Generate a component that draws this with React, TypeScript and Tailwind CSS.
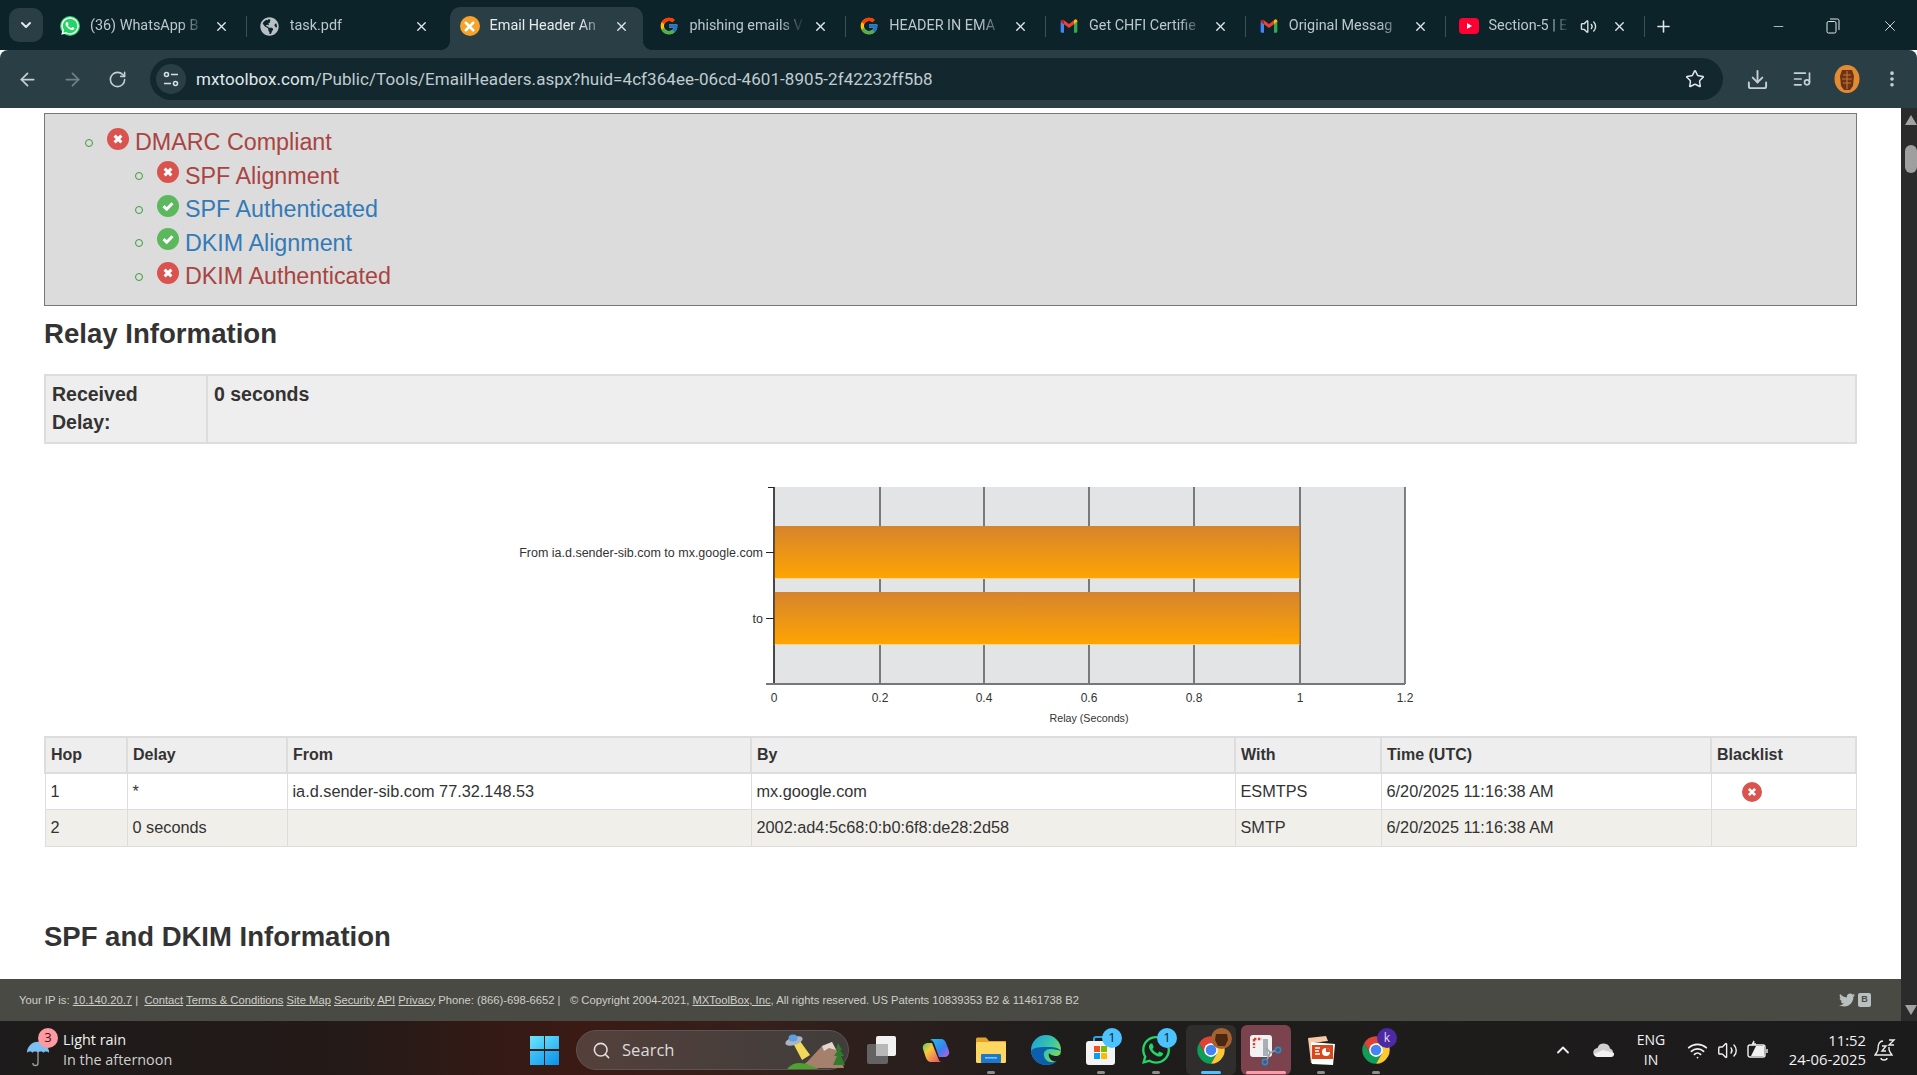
import type { ReactNode } from "react";
import {
  ArrowLeft,
  ArrowRight,
  ChevronDown,
  ChevronUp,
  Download,
  EllipsisVertical,
  ListMusic,
  Minus,
  Plus,
  RotateCw,
  Search,
  Star,
  Volume2,
  Wifi,
  X,
} from "lucide-react";
import { FaGlobeAmericas, FaTwitter, FaWhatsapp } from "react-icons/fa";
import { FcGoogle } from "react-icons/fc";

const sans = "font-['Liberation_Sans',Arial,sans-serif]";

// Small icons -------------------------------------------------------------

const ChromeIcon = ({ size = 30 }: { size?: number }) => (
  <svg width={size} height={size} viewBox="0 0 48 48">
    <path d="M43.05 13A22 22 0 0 0 4.95 13L14.5 29.5 24 13Z" fill="#db4437" />
    <path d="M4.95 13A22 22 0 0 0 24 46L33.5 29.5H14.5Z" fill="#0f9d58" />
    <path d="M24 46A22 22 0 0 0 43.05 13H24L33.5 29.5Z" fill="#fcc934" />
    <circle cx="24" cy="24" r="11" fill="#fff" />
    <circle cx="24" cy="24" r="8.5" fill="#4285f4" />
  </svg>
);

const GmailIcon = () => (
  <svg width="20" height="20" viewBox="0 0 24 24">
    <path d="M2 6v13a1 1 0 0 0 1 1h3V10z" fill="#4285f4" />
    <path d="M22 6v13a1 1 0 0 1-1 1h-3V10z" fill="#34a853" />
    <path d="M6 10l6 4.5 6-4.5V5l-6 4.5L6 5z" fill="#ea4335" />
    <path d="M18 5v5l4-3V6c0-1.6-2-2.6-3-1.7z" fill="#fbbc04" />
    <path d="M2 6v1l4 3V5C5 3.8 2 4.4 2 6z" fill="#c5221f" />
  </svg>
);

const MxIcon = () => (
  <div className="flex h-5 w-5 items-center justify-center rounded-full bg-[#f5a32c]">
    <X size={15} strokeWidth={4} color="#fff" />
  </div>
);

const WhatsAppTab = () => (
  <div className="flex h-5 w-5 items-center justify-center rounded-full bg-[#25d366]">
    <FaWhatsapp size={20} color="#fff" />
  </div>
);

const YouTubeIcon = () => (
  <svg width="20" height="20" viewBox="0 0 20 20">
    <rect x="0" y="2" width="20" height="16" rx="4" fill="#ff0033" />
    <path d="M8 7l5 3-5 3z" fill="#fff" />
  </svg>
);

const StatusFail = ({ size = 22 }: { size?: number }) => (
  <svg width={size} height={size} viewBox="0 0 22 22" className="shrink-0">
    <circle cx="11" cy="11" r="11" fill="#d9534f" />
    <path d="M7.6 7.6l6.8 6.8M14.4 7.6l-6.8 6.8" stroke="#fff" strokeWidth="3" />
  </svg>
);

const StatusPass = () => (
  <svg width="22" height="22" viewBox="0 0 22 22" className="shrink-0">
    <circle cx="11" cy="11" r="11" fill="#5cb85c" />
    <path d="M6.5 11.2l3.2 3 5.8-6" stroke="#fff" strokeWidth="3" fill="none" />
  </svg>
);

const Avatar = () => (
  <svg width="26" height="28" viewBox="0 0 26 28">
    <ellipse cx="13" cy="14" rx="12.5" ry="14" fill="#e38b32" />
    <path d="M8 5h10l2 6-1 10-3 4h-6l-3-4-1-10z" fill="#6b3418" />
    <path d="M9 10h8M8 14h10M9 18h8M13 6v18" stroke="#c9742c" strokeWidth="1.1" />
  </svg>
);

const TuneIcon = () => (
  <svg width="18" height="18" viewBox="0 0 18 18" fill="none" stroke="#d5dee0" strokeWidth="1.6">
    <circle cx="4.5" cy="4.5" r="2" />
    <path d="M9 4.5h7M2 13.5h7" />
    <circle cx="13.5" cy="13.5" r="2" />
  </svg>
);

const RestoreIcon = () => (
  <svg width="14" height="16" viewBox="0 0 14 16" fill="none" stroke="#e4e9ea" strokeWidth="1">
    <rect x="1" y="3.5" width="9" height="11.5" rx="1.5" />
    <path d="M4 1h7.5a1.5 1.5 0 0 1 1.5 1.5V12" />
  </svg>
);

const WindowsLogo = () => (
  <div className="grid h-[29px] w-[29px] grid-cols-2 gap-[1.5px]">
    <div className="bg-[linear-gradient(135deg,#6fe3fb,#3cc4f5)]" />
    <div className="bg-[linear-gradient(135deg,#5cd8fa,#2db4f3)]" />
    <div className="bg-[linear-gradient(135deg,#43c6f7,#1fa4ef)]" />
    <div className="bg-[linear-gradient(135deg,#2fb5f4,#0f8fe8)]" />
  </div>
);

const SearchArt = () => (
  <svg width="62" height="40" viewBox="0 0 62 40">
    <path d="M9 13l7-2 10 14-8 5z" fill="#f1d95a" />
    <ellipse cx="10" cy="11" rx="9" ry="4" fill="#a9b5c6" transform="rotate(-18 10 11)" />
    <ellipse cx="9" cy="8" rx="4.500" ry="3.500" fill="#5d9fe0" />
    <path d="M16 38l8-7 14-15 10-4 9 16 3 10z" fill="#a5806c" />
    <path d="M38 16l10-4 4 8-7-2-5 3z" fill="#e3d6cc" />
    <path d="M3 39c6-7 14-7 22-4l10 4z" fill="#4ca12f" />
    <path d="M54 13l4 7h-2l4 6h-3l4 9H49l4-9h-3l4-6h-2z" fill="#2f7d2b" />
  </svg>
);

const TaskView = () => (
  <svg width="32" height="32" viewBox="0 0 32 32">
    <rect x="11" y="2" width="20" height="20" rx="2" fill="#f2f2f2" />
    <rect x="2" y="10" width="21" height="20" rx="2" fill="#6f6f6f" fillOpacity="0.85" />
    <rect x="11" y="10" width="12" height="12" fill="#b8b8b8" />
  </svg>
);

const Copilot = () => (
  <svg width="30" height="30" viewBox="0 0 30 30">
    <defs>
      <linearGradient id="cpA" x1="0" y1="0" x2="1" y2="1">
        <stop offset="0" stopColor="#19c3e6" />
        <stop offset="0.6" stopColor="#3f7cf0" />
        <stop offset="1" stopColor="#c05fd8" />
      </linearGradient>
      <linearGradient id="cpB" x1="0" y1="0" x2="1" y2="1">
        <stop offset="0" stopColor="#52c96a" />
        <stop offset="0.35" stopColor="#f7c93e" />
        <stop offset="1" stopColor="#e8456a" />
      </linearGradient>
    </defs>
    <path d="M11 4h9c3 0 4 2 5 4l3 8c1 4-2 6-5 6h-5L13 8C12 6 11 5 9 5z" fill="url(#cpA)" />
    <path d="M20 27H10c-3 0-4-2-5-4L2 14c-1-4 2-6 5-6h4l6 15c1 2 1 3 3 4z" fill="url(#cpB)" />
  </svg>
);

const Folder = () => (
  <svg width="30" height="30" viewBox="0 0 30 30">
    <path d="M0 4a1.5 1.5 0 0 1 1.5-1.5H10L13 6h17v3H0z" fill="#e3a32b" />
    <rect x="0" y="7" width="30" height="21" rx="1.5" fill="#fcd860" />
    <rect x="5" y="19" width="20" height="9" rx="1" fill="#1d78c9" />
    <rect x="9" y="22" width="12" height="1.6" fill="#7cc2f2" />
  </svg>
);

const Edge = () => (
  <svg width="30" height="30" viewBox="0 0 30 30">
    <defs>
      <linearGradient id="edA" x1="0" y1="0" x2="1" y2="0.6">
        <stop offset="0" stopColor="#1b9de2" />
        <stop offset="0.6" stopColor="#37c6a8" />
        <stop offset="1" stopColor="#7bdc56" />
      </linearGradient>
    </defs>
    <circle cx="15" cy="15" r="15" fill="url(#edA)" />
    <path d="M0 16C1 26 9 30 15 30c5 0 8-1 11-4-6 3-12 0-13-5-1-4 2-7 6-7 5 0 11 2 11 2 0-1-4-4-10-4C8 12 3 12 0 16z" fill="#0d5fae" />
    <path d="M30 16c0 3-2 5-5 5-2 0-6-1-7-3-1 3 1 7 4 8 2 1 4 0 5-1 2-3 3-6 3-9z" fill="#1e2020" />
  </svg>
);

const Store = () => (
  <svg width="30" height="30" viewBox="0 0 30 30">
    <path d="M8 7V4a2 2 0 0 1 2-2h10" fill="none" stroke="#29a4e8" strokeWidth="2" />
    <rect x="0" y="6" width="29" height="24" rx="3" fill="#f4f4f4" />
    <rect x="8" y="11" width="6" height="6" fill="#f25022" />
    <rect x="15" y="11" width="6" height="6" fill="#7fba00" />
    <rect x="8" y="18" width="6" height="6" fill="#00a4ef" />
    <rect x="15" y="18" width="6" height="6" fill="#ffb900" />
  </svg>
);

const Snip = () => (
  <svg width="32" height="32" viewBox="0 0 32 32">
    <rect x="0" y="1" width="22" height="22" rx="3" fill="#f2f2f2" />
    <path d="M4 5h8M4 5v9" stroke="#d8412f" strokeWidth="2.4" strokeDasharray="2.4 1.5" fill="none" />
    <rect x="13" y="5" width="5" height="17" fill="#a9b0b5" />
    <path d="M16 14l4 4-3 8M26 16l-6 3-3 7" stroke="#9aa0a5" strokeWidth="1.6" fill="none" />
    <circle cx="15" cy="28" r="2.6" fill="none" stroke="#1e90d6" strokeWidth="1.6" />
    <circle cx="28" cy="16" r="2.6" fill="none" stroke="#1e90d6" strokeWidth="1.6" />
  </svg>
);

const Ppt = () => (
  <svg width="30" height="30" viewBox="0 0 30 30">
    <path d="M2 3l18-2 2 5-16 2 2 21-3-1z" fill="#f8c9a8" />
    <path d="M5 7l24 2-2 21-21-1z" fill="#fff" />
    <rect x="6" y="10" width="21" height="14" fill="#d9471c" />
    <path d="M9 13h5M9 16h4M9 19h5" stroke="#fff" strokeWidth="1.6" />
    <circle cx="20" cy="17" r="4" fill="#fff" />
    <path d="M20 17v-4a4 4 0 0 1 4 4z" fill="#d9471c" />
  </svg>
);

const Umbrella = () => (
  <svg width="24" height="34" viewBox="0 0 28 40">
    <path d="M1 22a13 13 0 0 1 26 0c-2-2-5-2-6.500 0-1.500-2-5-2-6.500 0-1.500-2-5-2-6.500 0-1.500-2-4.500-2-6.500 0z" fill="#7cc0f2" />
    <path d="M14 21v13a3 3 0 0 1-6 0" fill="none" stroke="#9b9b9b" strokeWidth="1.6" />
  </svg>
);

const Battery = () => (
  <svg width="22" height="20" viewBox="0 0 22 20" fill="none" stroke="#f0f0f0" strokeWidth="1.4">
    <rect x="1" y="5" width="17" height="12" rx="2" />
    <path d="M4 16l5-10h8v10z" fill="#f0f0f0" stroke="none" />
    <path d="M20 9v4M5 5l2-4-1 3h3" />
  </svg>
);

const BellZ = () => (
  <svg width="22" height="24" viewBox="0 0 22 24" fill="none" stroke="#ececec" strokeWidth="1.4">
    <path d="M9 3C5 3 4 7 4 11c0 3-2 4-3 6h17c-1-2-3-3-3-6 0-1 0-2 0-2M7 20c0 1 1 2 3 2s3-1 3-2" />
    <path d="M8 8h4l-4 5h4M15 2h5l-5 5h5" />
  </svg>
);

// Page data ---------------------------------------------------------------

type Tab = {
  title: string;
  icon: ReactNode;
  active?: boolean;
  sound?: boolean;
  separator?: boolean;
};

const tabs: Tab[] = [
  { title: "(36) WhatsApp B", icon: <WhatsAppTab />, separator: true },
  { title: "task.pdf", icon: <FaGlobeAmericas size={19} color="#b7c0c3" /> },
  { title: "Email Header An", icon: <MxIcon />, active: true },
  { title: "phishing emails V", icon: <FcGoogle size={20} />, separator: true },
  { title: "HEADER IN EMA", icon: <FcGoogle size={20} />, separator: true },
  { title: "Get CHFI Certifie", icon: <GmailIcon />, separator: true },
  { title: "Original Messag", icon: <GmailIcon />, separator: true },
  { title: "Section-5 | E", icon: <YouTubeIcon />, sound: true, separator: true },
];

const dmarcChecks = [
  { label: "SPF Alignment", pass: false },
  { label: "SPF Authenticated", pass: true },
  { label: "DKIM Alignment", pass: true },
  { label: "DKIM Authenticated", pass: false },
];

const hops = [
  { hop: "1", delay: "*", from: "ia.d.sender-sib.com 77.32.148.53", by: "mx.google.com", withProto: "ESMTPS", time: "6/20/2025 11:16:38 AM", blacklist: true },
  { hop: "2", delay: "0 seconds", from: "", by: "2002:ad4:5c68:0:b0:6f8:de28:2d58", withProto: "SMTP", time: "6/20/2025 11:16:38 AM", blacklist: false },
];

const gridX = [774, 880, 984, 1089, 1194, 1300, 1405];
const gridLabels = ["0", "0.2", "0.4", "0.6", "0.8", "1", "1.2"];

// Browser chrome ----------------------------------------------------------

function TabStrip() {
  return (
    <div className="flex h-[50px] shrink-0 items-start bg-[#0b2329] pt-[7px] pl-[9px] font-['Roboto',sans-serif] text-[14.400px]">
      <div className="mt-[1px] mr-[7px] flex h-[34px] w-[34px] items-center justify-center rounded-[10px] bg-[#2a3f45]">
        <ChevronDown size={16} strokeWidth={3} color="#e2e8ea" />
      </div>
      {tabs.map((tab) => (
        <div key={tab.title} className="flex h-[43px] items-start">
          <div
            className={`relative flex h-[43px] w-[193px] items-center pb-[5px] pl-[10px] ${
              tab.active
                ? "rounded-t-[10px] bg-[#2a3f45] text-[#e6ecee] before:absolute before:bottom-0 before:left-[-10px] before:h-[10px] before:w-[10px] before:bg-[radial-gradient(circle_at_0_0,transparent_10px,#2a3f45_10.5px)] after:absolute after:right-[-10px] after:bottom-0 after:h-[10px] after:w-[10px] after:bg-[radial-gradient(circle_at_100%_0,transparent_10px,#2a3f45_10.5px)]"
                : "text-[#bcc8cb]"
            }`}
          >
            <div className="flex w-5 shrink-0 justify-center">{tab.icon}</div>
            <div
              className={`ml-[10px] overflow-hidden whitespace-nowrap [mask-image:linear-gradient(to_right,#000_78%,transparent)] ${
                tab.sound ? "w-[80px]" : "w-[116px]"
              }`}
            >
              {tab.title}
            </div>
            {tab.sound && <Volume2 size={17} color="#d5dee0" className="ml-[11px]" />}
            <X size={15} strokeWidth={2.2} color="#dfe6e8" className={tab.sound ? "ml-[15px]" : "ml-[8px]"} />
          </div>
          <div className="flex h-[38px] w-[6.800px] items-center justify-center">
            {tab.separator && <div className="h-[21px] w-px bg-[#3c5157]" />}
          </div>
        </div>
      ))}
      <div className="flex h-[38px] items-center pl-[6px]">
        <Plus size={19} strokeWidth={2} color="#e2e8ea" />
      </div>
      <div className="ml-[98px] flex h-[38px] items-center">
        <Minus size={15} strokeWidth={1.2} color="#e4e9ea" />
      </div>
      <div className="ml-[40px] flex h-[38px] items-center">
        <RestoreIcon />
      </div>
      <div className="ml-[41px] flex h-[38px] items-center">
        <X size={18} strokeWidth={1.2} color="#e4e9ea" />
      </div>
    </div>
  );
}

function Toolbar() {
  return (
    <div className="flex h-[58px] shrink-0 items-center rounded-t-[8px] bg-[#2a3f45] pl-[17px]">
      <ArrowLeft size={21} strokeWidth={2} color="#c5d0d3" />
      <ArrowRight size={21} strokeWidth={2} color="#6f8187" className="ml-[24px]" />
      <RotateCw size={19} strokeWidth={2} color="#c5d0d3" className="ml-[25px]" />
      <div className="ml-[23px] flex h-[42px] w-[1573px] items-center rounded-full bg-[#12282e] pl-[6px]">
        <div className="flex h-[30px] w-[30px] items-center justify-center rounded-full bg-[#2a3f45]">
          <TuneIcon />
        </div>
        <div className="mt-[2px] ml-[10px] font-['Roboto',sans-serif] text-[17px] tracking-[0.07px] whitespace-nowrap text-[#e1e8ea]">
          mxtoolbox.com<span className="text-[#c0ccd0]">/Public/Tools/EmailHeaders.aspx?huid=4cf364ee-06cd-4601-8905-2f42232ff5b8</span>
        </div>
        <Star size={20} strokeWidth={1.8} color="#dfe6e8" className="mr-[18px] ml-auto" />
      </div>
      <Download size={23} strokeWidth={2} color="#c5d0d3" className="ml-[23px]" />
      <ListMusic size={20} strokeWidth={2} color="#c5d0d3" className="ml-[23px]" />
      <div className="ml-[22px]">
        <Avatar />
      </div>
      <EllipsisVertical size={20} strokeWidth={2.4} color="#c5d0d3" className="ml-[22px]" />
    </div>
  );
}

// Page content ------------------------------------------------------------

function Bullet() {
  return <div className="h-2 w-2 shrink-0 rounded-full border border-[#3b9b3b]" />;
}

function DmarcBox() {
  return (
    <div className="mt-[5px] h-[193px] border border-[#777] bg-[#dcdcdc] pt-[12px] text-[23.300px] leading-none">
      <div className="flex h-[33.500px] items-center pl-[40px] text-[#a94442]">
        <Bullet />
        <div className="mr-[6px] ml-[14px] -mt-[8px]">
          <StatusFail />
        </div>
        DMARC Compliant
      </div>
      {dmarcChecks.map((c) => (
        <div key={c.label} className={`flex h-[33.500px] items-center pl-[90px] ${c.pass ? "text-[#337ab7]" : "text-[#a94442]"}`}>
          <Bullet />
          <div className="mr-[6px] ml-[14px] -mt-[8px]">{c.pass ? <StatusPass /> : <StatusFail />}</div>
          {c.label}
        </div>
      ))}
    </div>
  );
}

function RelayChart() {
  return (
    <svg viewBox="44 444 1813 292" className="block h-[292px] w-full" fontFamily="'Liberation Sans', Arial, sans-serif">
      <defs>
        <linearGradient id="barFill" x1="0" y1="0" x2="0" y2="1">
          <stop offset="0" stopColor="#d6842e" />
          <stop offset="1" stopColor="#ffa500" />
        </linearGradient>
      </defs>
      <rect x="774" y="487" width="631" height="197" fill="#e3e4e6" />
      {gridX.map((x, i) => (
        <g key={x}>
          <line x1={x} x2={x} y1="487" y2="684" stroke="#333" strokeWidth="1.2" />
          <text x={x} y="702" fontSize="12" fill="#333" textAnchor="middle">
            {gridLabels[i]}
          </text>
        </g>
      ))}
      <rect x="774" y="526" width="526" height="53" fill="url(#barFill)" />
      <rect x="774" y="592" width="526" height="53" fill="url(#barFill)" />
      <line x1="774" x2="1300" y1="578.500" y2="578.500" stroke="#fbd48e" />
      <line x1="774" x2="1300" y1="644.500" y2="644.500" stroke="#fbd48e" />
      <line x1="1300" x2="1300" y1="526" y2="645" stroke="#8a6a3a" strokeWidth="1" />
      <line x1="774" x2="774" y1="487" y2="684" stroke="#222" strokeWidth="1.2" />
      <line x1="768" x2="774" y1="487.500" y2="487.500" stroke="#222" />
      <line x1="766" x2="774" y1="552.500" y2="552.500" stroke="#222" />
      <line x1="766" x2="774" y1="618.500" y2="618.500" stroke="#222" />
      <line x1="766" x2="1405" y1="684" y2="684" stroke="#777" strokeWidth="2" />
      <text x="763" y="557" fontSize="12.500" fill="#333" textAnchor="end">
        From ia.d.sender-sib.com to mx.google.com
      </text>
      <text x="763" y="623" fontSize="12.500" fill="#333" textAnchor="end">
        to
      </text>
      <text x="1089" y="722" fontSize="10.700" fill="#333" textAnchor="middle">
        Relay (Seconds)
      </text>
    </svg>
  );
}

function HopTable() {
  const th = "border-2 border-[#ddd] px-[5px] text-left text-[16px] font-bold";
  const td = "border border-[#ddd] px-[5px]";
  return (
    <table className="w-full table-fixed border-collapse text-[16.300px] text-[#333]">
      <colgroup>
        <col className="w-[82px]" />
        <col className="w-[160px]" />
        <col className="w-[464px]" />
        <col className="w-[484px]" />
        <col className="w-[146px]" />
        <col className="w-[330px]" />
        <col />
      </colgroup>
      <thead>
        <tr className="h-[36px] bg-[#eee]">
          {["Hop", "Delay", "From", "By", "With", "Time (UTC)", "Blacklist"].map((h) => (
            <th key={h} className={th}>
              {h}
            </th>
          ))}
        </tr>
      </thead>
      <tbody>
        {hops.map((r, i) => (
          <tr key={r.hop} className={`${i % 2 ? "h-[37px] bg-[#f0efe9]" : "h-[36px] bg-white"}`}>
            <td className={td}>{r.hop}</td>
            <td className={td}>{r.delay}</td>
            <td className={td}>{r.from}</td>
            <td className={td}>{r.by}</td>
            <td className={td}>{r.withProto}</td>
            <td className={td}>{r.time}</td>
            <td className={td}>
              {r.blacklist && (
                <div className="mt-[1px] ml-[25px]">
                  <StatusFail size={20} />
                </div>
              )}
            </td>
          </tr>
        ))}
      </tbody>
    </table>
  );
}

function PageFooter() {
  const link = "underline";
  return (
    <div className={`flex h-[42px] shrink-0 items-center bg-[#4a4a44] pr-[30px] pl-[19px] text-[11.240px] whitespace-pre text-[#cfcfca] ${sans}`}>
      <span>
        Your IP is: <span className={link}>10.140.20.7</span> |{"  "}
        <span className={link}>Contact</span> <span className={link}>Terms &amp; Conditions</span>{" "}
        <span className={link}>Site Map</span> <span className={link}>Security</span> <span className={link}>API</span>{" "}
        <span className={link}>Privacy</span> Phone: (866)-698-6652 |{"   "}© Copyright 2004-2021,{" "}
        <span className={link}>MXToolBox, Inc</span>, All rights reserved. US Patents 10839353 B2 &amp; 11461738 B2
      </span>
      <div className="ml-auto flex items-center gap-[3px]">
        <FaTwitter size={16} color="#b9c0c0" />
        <div className="flex h-[14px] w-[13px] items-center justify-center rounded-[2px] bg-[#b9c0c0] text-[9px] font-bold text-[#4a4a44]">B</div>
      </div>
    </div>
  );
}

function Scrollbar() {
  return (
    <div className="flex h-full w-[16px] shrink-0 flex-col items-end bg-[#2b2b2b]">
      <div className="mt-[7px] h-0 w-0 border-x-[6.500px] border-b-[10px] border-x-transparent border-b-[#a3a3a3]" />
      <div className="mt-[20px] h-[28px] w-[12px] rounded-l-[6px] rounded-r-[6px] bg-[#9f9f9f]" />
      <div className="mt-auto mb-[6px] h-0 w-0 border-x-[6.500px] border-t-[10px] border-x-transparent border-t-[#a3a3a3]" />
    </div>
  );
}

// Windows taskbar ---------------------------------------------------------

type Slot = {
  key: string;
  icon: ReactNode;
  badge?: ReactNode;
  boxed?: string;
  indicator?: string;
};

const Badge = ({ children }: { children: ReactNode }) => (
  <div className="absolute top-[3px] right-[6px] flex h-[20px] w-[20px] items-center justify-center rounded-full bg-[#4cc2ff] text-[13px] text-[#10222c]">
    {children}
  </div>
);

const slots: Slot[] = [
  { key: "taskview", icon: <TaskView /> },
  { key: "copilot", icon: <Copilot /> },
  { key: "files", icon: <Folder />, indicator: "h-[3px] w-[8px] bg-[#8c8c8c]" },
  { key: "edge", icon: <Edge /> },
  { key: "store", icon: <Store />, badge: <Badge>1</Badge>, indicator: "h-[3px] w-[8px] bg-[#8c8c8c]" },
  { key: "whatsapp", icon: <FaWhatsapp size={32} color="#25d366" />, badge: <Badge>1</Badge>, indicator: "h-[3px] w-[8px] bg-[#8c8c8c]" },
  {
    key: "chrome",
    icon: <ChromeIcon />,
    boxed: "bg-[#2f2e2c]",
    badge: (
      <div className="absolute top-[3px] right-[6px]">
        <svg width="21" height="21" viewBox="0 0 21 21">
          <circle cx="10.500" cy="10.500" r="10.500" fill="#a5622e" />
          <path d="M5 6h11l1 6-3 6H7l-3-6z" fill="#4a2812" />
        </svg>
      </div>
    ),
    indicator: "h-[3px] w-[20px] bg-[#4cc2ff]",
  },
  { key: "snip", icon: <Snip />, boxed: "bg-[#7a434d]", indicator: "h-[3px] w-[40px] bg-[#ff9aa8]" },
  { key: "ppt", icon: <Ppt />, indicator: "h-[3px] w-[8px] bg-[#8c8c8c]" },
  {
    key: "chromek",
    icon: <ChromeIcon />,
    badge: (
      <div className="absolute top-[3px] right-[6px] flex h-[20px] w-[20px] items-center justify-center rounded-full bg-[#4b2aa3] text-[12px] text-[#e6dcf8]">
        k
      </div>
    ),
    indicator: "h-[3px] w-[8px] bg-[#8c8c8c]",
  },
];

function Taskbar() {
  return (
    <div className="flex h-[54px] shrink-0 items-center bg-[linear-gradient(90deg,#1d1b1b_0%,#241a18_18%,#3b1a14_30%,#34201c_40%,#1f1d1c_55%,#1c1b1b_100%)] pt-[4px] font-['Open_Sans',sans-serif] text-[#f2f2f2]">
      <div className="flex h-full w-[517px] shrink-0 items-center pl-[26px]">
        <div className="relative h-[40px] w-[26px] shrink-0 pt-[4px]">
          <Umbrella />
          <div className="absolute top-[-2px] left-[12px] flex h-[20px] w-[20px] items-center justify-center rounded-full bg-[#ff9aa2] text-[13px] text-[#3a1417]">3</div>
        </div>
        <div className="ml-[11px] text-[14.400px] leading-[20px]">
          <div>Light rain</div>
          <div className="text-[#cfcfcf]">In the afternoon</div>
        </div>
      </div>
      <div className="flex w-[55px] shrink-0 justify-center">
        <WindowsLogo />
      </div>
      <div className="ml-[4px] flex h-[40px] w-[273px] shrink-0 items-center rounded-full border border-[#5a5553] bg-[linear-gradient(90deg,#54403b,#403d3b)] pr-[2px] pl-[15px]">
        <Search size={19} strokeWidth={2} color="#e0e0e0" />
        <span className="ml-[11px] text-[16.600px] text-[#dcdcdc]">Search</span>
        <div className="ml-auto">
          <SearchArt />
        </div>
      </div>
      <div className="ml-[4px] flex h-full">
        {slots.map((s) => (
          <div key={s.key} className="relative flex h-full w-[55px] shrink-0 items-center justify-center">
            {s.boxed && <div className={`absolute inset-x-[2.500px] top-0 bottom-0 rounded-[6px] ${s.boxed}`} />}
            <div className="relative">{s.icon}</div>
            {s.badge}
            {s.indicator && <div className={`absolute bottom-[1px] left-1/2 -translate-x-1/2 rounded-full ${s.indicator}`} />}
          </div>
        ))}
      </div>
      <ChevronUp size={20} strokeWidth={2.2} color="#f0f0f0" className="ml-[150px]" />
      <svg width="22" height="16" viewBox="0 0 22 16" className="ml-[20px]">
        <path d="M5 15a4.500 4.500 0 0 1-.5-9A6.500 6.500 0 0 1 17 6.500a4.500 4.500 0 0 1 0 8.500z" fill="#cfcfcf" />
        <path d="M1 12l9-4 11 3v1a3 3 0 0 1-3 3H5a4 4 0 0 1-4-3z" fill="#f2f2f2" />
      </svg>
      <div className="ml-[21px] w-[30px] text-center text-[14px] leading-[20px]">
        <div>ENG</div>
        <div>IN</div>
      </div>
      <Wifi size={21} strokeWidth={2} color="#f0f0f0" className="ml-[21px]" />
      <Volume2 size={21} strokeWidth={1.6} color="#f0f0f0" className="ml-[9px]" />
      <div className="ml-[9px]">
        <Battery />
      </div>
      <div className="w-[97px] text-right text-[14.800px] leading-[19px]">
        <div>11:52</div>
        <div className="whitespace-nowrap">24-06-2025</div>
      </div>
      <div className="ml-[8px]">
        <BellZ />
      </div>
    </div>
  );
}

export default function App() {
  return (
    <div className="flex h-[1075px] w-[1917px] flex-col overflow-hidden bg-white">
      <TabStrip />
      <Toolbar />
      <div className="flex h-[913px] shrink-0">
        <div className="flex min-w-0 flex-1 flex-col">
          <div className={`min-h-0 flex-1 overflow-hidden pr-[44px] pl-[44px] text-[#333] ${sans}`}>
            <DmarcBox />
            <h2 className="flex h-[54px] items-center pt-[2px] text-[27.600px] font-bold">Relay Information</h2>
            <div className="mt-[14px] flex h-[70px] border-2 border-[#ddd] bg-[#eee] text-[19.500px] leading-[28px] font-bold">
              <div className="w-[162px] shrink-0 border-r-2 border-[#ddd] px-[6px] pt-[4px]">Received Delay:</div>
              <div className="px-[6px] pt-[4px]">0 seconds</div>
            </div>
            <RelayChart />
            <HopTable />
            <h2 className="mt-[72px] text-[27.500px] leading-[36px] font-bold">SPF and DKIM Information</h2>
          </div>
          <PageFooter />
        </div>
        <Scrollbar />
      </div>
      <Taskbar />
    </div>
  );
}
